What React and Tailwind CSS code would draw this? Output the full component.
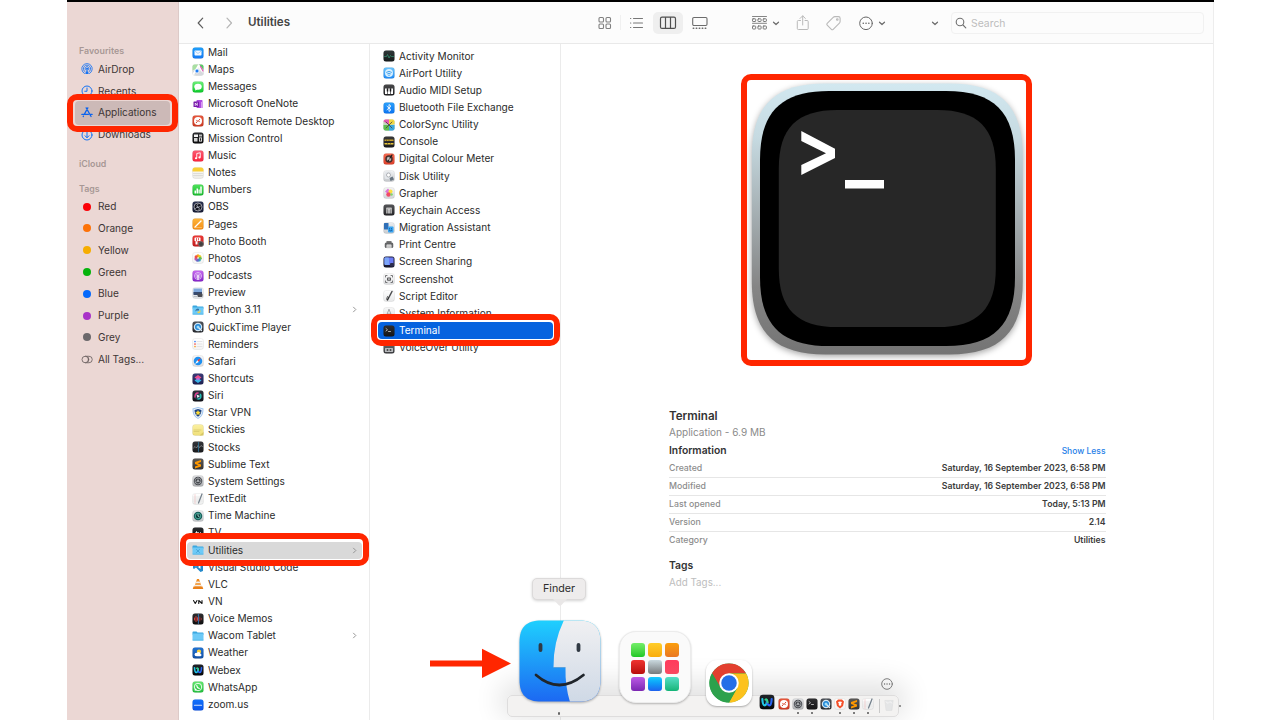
import React from "react";

const S = ({ d, c = "#fff", w = 2, f = "none", o = 1 }) => (
  <path d={d} stroke={c} strokeWidth={w} fill={f} opacity={o} strokeLinecap="round" strokeLinejoin="round" />
);
const F = ({ d, c = "#fff" }) => <path d={d} fill={c} />;
const C = ({ x = 12, y = 12, r = 5, c = "#fff", s = "none", w = 1.5 }) => (
  <circle cx={x} cy={y} r={r} fill={c} stroke={s} strokeWidth={w} />
);
const R = ({ x, y, w, h, c = "#fff", r = 0 }) => <rect x={x} y={y} width={w} height={h} rx={r} fill={c} />;

const folder = (extra) => (
  <>
    <F d="M1 4.500Q1 3 2.500 3H9l2 2h10.500Q23 5 23 6.500V9H1z" c="#3aa7df" />
    <R x={1} y={7} w={22} h={14} r={1.5} c="#6dcaf7" />
    <R x={1} y={19.5} w={22} h={1.5} c="#4fb2e4" />
    {extra}
  </>
);

const art = {
  mail: ["#1ea0fb", "#1678f2", <><R x={5} y={7} w={14} h={10} r={1.5} c="#f4f8ff" /><S d="M5.500 8l6.500 5 6.500-5" c="#7bb5f3" w={1.2} /></>],
  maps: ["#f2f3f1", "#e6ebe6", <><F d="M1 5q0-4 4-4h7v7L1 13z" c="#a8dfa2" /><F d="M14 1h5q4 0 4 4v7z" c="#58c965" /><F d="M1 14l9-5 13 9v3l-3 2H8z" c="#d6d9de" /><S d="M3 20L13 3l8 12" c="#fff" w={3} /><S d="M17 5l5 9" c="#de5db4" w={2.5} /><C x={10} y={14} r={4} c="#1b7cf4" s="#fff" /></>],
  messages: ["#6df07a", "#0bc929", <><ellipse cx="12" cy="11.500" rx="7.500" ry="6" fill="#fff" /><F d="M7 15l-1 4 5-2z" /></>],
  onenote: [null, null, <><R x={9} y={4} w={12} h={16} r={1.5} c="#ae4be0" /><R x={18} y={8} w={4} h={12} c="#d59bf0" /><R x={3} y={7} w={11} h={11} r={1} c="#7719aa" /><S d="M6.500 15V10l4 5v-5" w={1.5} /></>],
  remote: ["#e8573c", "#c93a24", <><C r={8} /><S d="M8.500 15.500l2.500-3-1.500-2M15.500 8.500l-2.500 3 1.500 2" c="#d8452d" w={2} /></>],
  mission: ["#2c2d30", "#0b0b0c", <><R x={4} y={5} w={8} h={5} c="#f4f4f4" /><R x={4} y={12} w={7} h={7} c="#d3d3d3" /><R x={14} y={5} w={6} h={4} c="#bbb" /><R x={14} y={11} w={6} h={8} c="#fff" /><R x={15.5} y={12.5} w={3} h={5} c="#222" /></>],
  music: ["#fb5c74", "#fa233b", <><S d="M9.500 16V7l7-1.500V14" w={1.8} /><C x={8} y={16.5} r={2.2} /><C x={15} y={14.8} r={2.2} /></>],
  notes: ["#fbfbf8", "#ecebe6", <><F d="M1 9V6q0-5 5-5h12q5 0 5 5v3z" c="#f9cf35" /><S d="M3 13h18M3 17h18" c="#c9c8c4" w={1} /></>],
  numbers: ["#4fe35b", "#18b82e", <><R x={5} y={13} w={3} h={6} /><R x={9} y={9} w={3} h={10} /><R x={13} y={11} w={2.5} h={8} /><R x={16.5} y={5} w={3} h={14} /></>],
  obs: ["#2b3350", "#161b34", <><C r={8} c="#11131d" s="#d8d9df" w={1.3} /><S d="M12 6q-4 3-1 6 4 2 6-2M7 15q2-4 6-2 3 2 1 5" c="#c5c8d6" w={1.5} /></>],
  pages: ["#fdb53c", "#f58d13", <><S d="M6 18L18 6" w={2.5} /><S d="M5 19h14" c="#ffdba1" w={1} /></>],
  booth: ["#ef3a36", "#c01a1c", <><R x={5} y={5} w={12} h={7} r={1} /><R x={7} y={12} w={4} h={7} /><S d="M9 7v5M13 7v3" c="#d22" w={1.5} /><C x={18} y={18} r={5} c="#44403f" s="#777" /></>],
  photos: ["#fff", "#f3f3f3", <><C y={7.5} r={3.2} c="#f9a51b" /><C x={15.5} y={9} r={3.2} c="#e6d12a" /><C x={16.5} y={12.5} r={3.2} c="#74c14a" /><C x={14.5} y={15.8} r={3.2} c="#33a9b9" /><C x={11} y={16.3} r={3.2} c="#5b6ec9" /><C x={8} y={13.8} r={3.2} c="#b45cb3" /><C x={8.3} y={9.8} r={3.2} c="#ef4f44" /><C r={1.5} c="#eee4cf" /></>],
  podcasts: ["#c86bf0", "#8421c8", <><C r={7} c="none" s="#f1dcfb" w={1.5} /><C r={4} c="none" s="#f1dcfb" w={1.3} /><C r={2} /><R x={10.8} y={13} w={2.4} h={6.5} r={1} /></>],
  preview: ["#f5f6f7", "#dfe2e5", <><R x={3} y={3} w={17} h={11} c="#7fa9dc" /><R x={3} y={10} w={17} h={6} c="#384b6e" /><R x={11} y={13} w={10} h={7} r={2} c="#4a4d54" /><S d="M4 19h6" c="#b8bcc2" /></>],
  python: [null, null, folder(<><F d="M9 10q3-2 5 0v3H9q-2 0-2 3-1-5 2-6z" c="#3572a5" /><F d="M15 12q3 0 2 4-1 3-6 2v-3h4z" c="#f6cf45" /></>)],
  quicktime: ["#50545b", "#25282d", <><C r={8.5} c="#d3e7f5" /><C r={6} c="#2388d8" /><C r={3} c="#9ddcf8" /><S d="M14 14l5 5" c="#dceaf4" w={2.5} /></>],
  reminders: ["#fff", "#f3f3f3", <><C x={6} y={7} r={1.7} c="#3583f6" /><C x={6} y={12} r={1.7} c="#f4493f" /><C x={6} y={17} r={1.7} c="#f7a02c" /><S d="M10 7h10M10 12h10M10 17h10" c="#cfcfd2" w={1} /></>],
  safari: ["#f7f7f7", "#dcdcde", <><C r={8.5} c="#1e90f0" /><F d="M18 6l-4.500 8-3-3.500z" c="#f0413a" /><F d="M6 18l4.500-7.500 3 3.500z" /></>],
  shortcuts: ["#3b3b78", "#1d2150", <><F d="M12 4l7 5-7 5-7-5z" c="#ef4f8a" /><F d="M12 10l7 5-7 5-7-5z" c="#36b6e8" /><F d="M12 9l4 3-4 3-4-3z" c="#b767e0" /></>],
  siri: ["#31313c", "#101017", <><C r={7.5} c="#27384b" /><S d="M6 14q0-8 6-8" c="#e23c8d" w={3} /><S d="M17 9q3 8-5 9" c="#24bfb3" w={3} /><F d="M9 9l7 3-5 4z" c="#e6f4f5" /></>],
  star: [null, null, <><F d="M12 0l11 3q1 15-11 21Q0 18 1 3z" c="#9fc4ef" /><F d="M12 2l9 2.500Q21 17 12 22 3 17 3 4.500z" c="#f2f7fd" /><F d="M12 4l7 2q0 9-7 13.500Q5 15 5 6z" c="#1c4487" /><F d="M12 6l1.700 3.600 3.800.4-2.800 2.700.8 3.900L12 14.700l-3.500 1.900.8-3.900L6.500 10l3.800-.4z" c="#ffdb35" /></>],
  stickies: ["#fbf0a1", "#efdf78", <><S d="M4 12h14M4 15h10" c="#c8b95a" w={1} /><F d="M15 23l8-7v7z" c="#d7c765" /></>],
  stocks: ["#35363b", "#18191c", <><S d="M3 14l3-3 3 3 3-5 3 4 3-4 3 2" c="#b2b5b9" w={1.1} /><S d="M13 3v18" c="#2f7ea5" w={1.5} /></>],
  sublime: ["#5c5a58", "#363433", <F d="M18 4v4l-7 2.500 7 2.500v4L6 21v-4l7-2.500L6 12V8z" c="#ff9800" />],
  settings: ["#dfe0e2", "#aeb0b3", <><C r={8.5} c="#45484d" /><C r={6} c="none" s="#a7aaae" w={1.5} /><C r={2} c="#c2c4c7" /><S d="M12 10V4M10 13l-5 3M14 13l5 3" c="#a7aaae" w={1.3} /></>],
  textedit: ["#fff", "#eceded", <><S d="M3 8h18M3 12h18M3 16h18" c="#dadada" w={1} /><S d="M6 3v18" c="#f2b2b2" w={1} /><S d="M20 2l-7 18" c="#74818c" w={2.5} /></>],
  timemachine: ["#ecedef", "#bfc2c5", <><C r={8.5} c="#155e59" /><C r={5.5} c="#0c3a39" s="#59c2b1" /><S d="M12 8.500V12l2.500 1.500" c="#c3f5eb" w={1.5} /></>],
  tv: ["#2b2c2f", "#0b0b0c", <S d="M9 9v6h2M7.500 11H11M13 11l2 4 2-4" w={1.5} />],
  utilities: [null, null, folder(<S d="M9 11l6 6M15 11l-6 6" c="#3f9bd0" w={1.5} />)],
  vscode: [null, null, <><F d="M17 2l5 2v16l-5 2L8 13l-4 3-2-1.500V9.500L4 8l4 3z" c="#2489ca" /><F d="M17 8v8l-5-4z" /></>],
  vlc: [null, null, <><F d="M10 2h4l5 15H5z" c="#f08a1d" /><F d="M8.700 7h6.600l1.100 3.500H7.600z" c="#f4f1ec" /><F d="M6.500 13.500h11l.8 2.500H5.700z" c="#f4f1ec" /><F d="M3 17h18l1.500 5h-21z" c="#e9801a" /></>],
  vn: [null, null, <S d="M3 9l3.500 6L10 9M13.500 15V9l6.500 6V9" c="#161616" w={2.2} />],
  memos: ["#2f2f31", "#0d0d0e", <><S d="M5 10v4M8 7v10M11 9.500v5" c="#f0443e" w={1.8} /><S d="M12.800 3v18" c="#4aa3ff" w={1.3} /><S d="M15.500 8v8M18.500 10.500v3" c="#a5393a" w={1.8} /></>],
  wacom: [null, null, folder(null)],
  weather: ["#2173d4", "#124fa2", <><C x={14} y={9.5} r={4.3} c="#fbd13b" /><C x={8.5} y={15} r={3.3} /><C x={13} y={14} r={4} /><R x={8} y={14} w={11} h={4.3} r={2.1} /></>],
  webex: ["#20242a", "#050608", <><S d="M5 7.500q.5 9.500 3.500 9.500t3.500-7" c="#21c8e8" w={3.2} /><S d="M12 10q.5 7 3.500 7T19 7.500" c="#2a66f5" w={3.2} /><S d="M9.500 8.500q2.500-2 3.500 4" c="#35d685" w={2.8} /></>],
  whatsapp: ["#64e86f", "#20bd3b", <><C r={7.5} c="none" s="#fff" w={1.8} /><F d="M5 19.500l1.500-5 3.500 3.500z" /><S d="M9.500 9q0 4 5 6" w={2.4} /></>],
  zoom: ["#1272fc", "#0a54ea", <S d="M5 12.500h14" c="#cfe0fd" w={2.4} />],
  activity: ["#30393a", "#151a1b", <S d="M3 13h4l2-4 3 7 3-5 2 2h4" c="#35a07c" w={1.3} />],
  airport: ["#6cc6fd", "#1d88f3", <><C r={8} c="#d7effe" /><S d="M7 10.500q5-4 10 0M9 13.500q3-2.500 6 0" c="#2492ec" w={1.6} /><C y={16.5} r={1.3} c="#2492ec" /></>],
  midi: ["#4a4a4c", "#222224", <><R x={4} y={9} w={4.5} h={11} /><R x={9.7} y={9} w={4.5} h={11} /><R x={15.5} y={9} w={4.5} h={11} /><R x={7.5} y={9} w={3} h={6} c="#19191a" /><R x={13.5} y={9} w={3} h={6} c="#19191a" /></>],
  bluetooth: ["#2aa0fb", "#0b74f2", <S d="M8 8.500l8 7-4 3.500V5l4 3.500-8 7" w={1.7} />],
  colorsync: ["#d7e4a8", "#9ac8de", <><F d="M1 5q0-4 4-4h7v11z" c="#e85bb3" /><F d="M12 1h7q4 0 4 4v5l-11 2z" c="#f1d742" /><F d="M23 12v7q0 4-4 4h-7V12z" c="#3aa7df" /><F d="M1 12h11v11H5q-4 0-4-4z" c="#62bf4f" /><S d="M6 6l12 12M18 6L6 18" c="#444" w={1.6} /></>],
  console: ["#39393a", "#1a1a1b", <><S d="M4 8.500h16" c="#c8a12b" w={2.6} /><S d="M4 15.500h16" c="#e8c53b" w={2.6} /><S d="M7 8.500v0M12 8.500v0M9 15.500v0M15 15.500v0" c="#2b2b2b" w={1.5} /></>],
  colour: ["#f76a50", "#dc3f2a", <><C r={7.5} c="#47302d" /><C r={4.5} c="#b7b7b7" /><S d="M18 4l-8 12" c="#1b1b1b" w={2.5} /><C r={1.5} c="#f5f5f5" /></>],
  disk: ["#f5f6f7", "#c3c6ca", <><R x={4} y={3} w={13} h={15} r={2} c="#e3e6ea" /><C x={11} y={10} r={4} c="#fff" s="#9b9ea3" /><F d="M13 16l6-3 3 6-7 3z" c="#687480" /></>],
  grapher: ["#f4f4f4", "#d2d4d8", <><F d="M4 9l6-6 4 5-5 5z" c="#dc76d9" /><C x={15} y={9} r={4} c="#ffe03c" /><C x={11} y={15} r={4.5} c="#f04b68" /><C x={17} y={15} r={2.5} c="#80d66a" /></>],
  keychain: ["#56575a", "#232326", <><R x={6} y={7} w={12} h={4} r={2} c="#bdbdbd" /><R x={6} y={10} w={3.5} h={9} c="#a9a9a9" /><R x={14.5} y={10} w={3.5} h={9} c="#a9a9a9" /><R x={10.5} y={10} w={3} h={9} c="#e4e4e4" /></>],
  migration: ["#eceef1", "#c8cbcf", <><R x={2} y={2} w={9} h={13} c="#2f6fb7" r={1} /><R x={10} y={9} w={11} h={12} c="#37a5f3" r={2} /><S d="M13 13v1M17 13v1M13 17q2.500 2 5 0" c="#0f3d73" w={1.2} /></>],
  print: [null, null, <><R x={7} y={4} w={10} h={5} c="#777" /><R x={3.5} y={7} w={17} h={11} r={3} c="#626365" /><R x={7} y={11} w={10} h={8} r={1} c="#e9e9e9" /><S d="M9 14h6M9 16.500h6" c="#888" w={1} /></>],
  sharing: ["#2a2b4b", "#15162a", <><R x={3} y={3} w={18} h={15} r={2} c="#6c7cf5" /><R x={3} y={3} w={9} h={15} r={2} c="#7ca5fa" /><R x={14} y={14} w={8} h={7} r={2} c="#2b2d4f" /></>],
  screenshot: ["#fbfbfb", "#dcdddf", <><S d="M5 8V5h3M16 5h3v3M19 16v3h-3M8 19H5v-3" c="#58595b" w={1.6} /><R x={8} y={9} w={8} h={6.5} r={1.5} c="#58595b" /><C r={1.7} c="#eee" /></>],
  script: ["#fff", "#e6e7e8", <><S d="M18 3L9 20" c="#4a4b4d" w={3} /><S d="M9 13q-3 5-1 7 3-1 3-5" c="#2c2c2e" w={1.5} /></>],
  sysinfo: ["#f8f8f8", "#dfe0e2", <S d="M12 5L6 19M12 5l6 14M9 14h6M4 19h16" c="#8d8f92" w={1.5} />],
  terminal: ["#2f2f31", "#151516", <S d="M6 7l3 2.500L6 12M11 13h4" c="#e8e8e8" w={1.4} />],
  voiceover: ["#6c6e71", "#3b3c3f", <><R x={4} y={12} w={16} h={8} r={1} c="#b9bbbe" /><C x={9} y={16} r={2} c="#444" /><C x={15} y={16} r={2} c="#444" /></>],
  brave: ["#fff", "#f1f1f1", <><F d="M8 3h8l4 4-2 9-6 5-6-5L4 7z" c="#f4502a" /><F d="M8 8l4-1 4 1-2 4 1 2-3 2-3-2 1-2z" /></>],
};

function AppIcon({ k, cls = "size-3" }) {
  const [a, b, g] = art[k];
  const id = React.useId();
  return (
    <svg viewBox="0 0 24 24" className={`${cls} shrink-0`}>
      {a && (
        <>
          <defs>
            <linearGradient id={id} x1="0" y1="0" x2="0" y2="1">
              <stop offset="0" stopColor={a} />
              <stop offset="1" stopColor={b} />
            </linearGradient>
          </defs>
          <rect x="1" y="1" width="22" height="22" rx="5" fill={`url(#${id})`} stroke="#000" strokeOpacity=".14" strokeWidth=".8" />
        </>
      )}
      {g}
    </svg>
  );
}

const apps = [
  ["Mail", "mail"], ["Maps", "maps"], ["Messages", "messages"], ["Microsoft OneNote", "onenote"],
  ["Microsoft Remote Desktop", "remote"], ["Mission Control", "mission"], ["Music", "music"], ["Notes", "notes"],
  ["Numbers", "numbers"], ["OBS", "obs"], ["Pages", "pages"], ["Photo Booth", "booth"], ["Photos", "photos"],
  ["Podcasts", "podcasts"], ["Preview", "preview"], ["Python 3.11", "python", true], ["QuickTime Player", "quicktime"],
  ["Reminders", "reminders"], ["Safari", "safari"], ["Shortcuts", "shortcuts"], ["Siri", "siri"], ["Star VPN", "star"],
  ["Stickies", "stickies"], ["Stocks", "stocks"], ["Sublime Text", "sublime"], ["System Settings", "settings"],
  ["TextEdit", "textedit"], ["Time Machine", "timemachine"], ["TV", "tv"], ["Utilities", "utilities", true],
  ["Visual Studio Code", "vscode"], ["VLC", "vlc"], ["VN", "vn"], ["Voice Memos", "memos"],
  ["Wacom Tablet", "wacom", true], ["Weather", "weather"], ["Webex", "webex"], ["WhatsApp", "whatsapp"], ["zoom.us", "zoom"],
];

const utilities = [
  ["Activity Monitor", "activity"], ["AirPort Utility", "airport"], ["Audio MIDI Setup", "midi"],
  ["Bluetooth File Exchange", "bluetooth"], ["ColorSync Utility", "colorsync"], ["Console", "console"],
  ["Digital Colour Meter", "colour"], ["Disk Utility", "disk"], ["Grapher", "grapher"], ["Keychain Access", "keychain"],
  ["Migration Assistant", "migration"], ["Print Centre", "print"], ["Screen Sharing", "sharing"],
  ["Screenshot", "screenshot"], ["Script Editor", "script"], ["System Information", "sysinfo"],
  ["Terminal", "terminal"], ["VoiceOver Utility", "voiceover"],
];

function FileRow({ name, icon, more, tone = "" }) {
  return (
    <li className={`flex h-[17.17px] items-center gap-1 rounded-[4px] pr-1 pl-[5px] ${tone}`}>
      <AppIcon k={icon} />
      <span className="flex-1 whitespace-nowrap">{name}</span>
      {more && (
        <svg viewBox="0 0 8 8" className="size-[7px]" fill="none" stroke="#929292" strokeWidth="1.1">
          <path d="M2.500 1l3 3-3 3" />
        </svg>
      )}
    </li>
  );
}

const tags = [
  ["Red", "bg-[#fb0007]"], ["Orange", "bg-[#fd7208]"], ["Yellow", "bg-[#f6ad00]"], ["Green", "bg-[#06b30c]"],
  ["Blue", "bg-[#0569fb]"], ["Purple", "bg-[#a933c8]"], ["Grey", "bg-[#6b686b]"],
];

const line = { fill: "none", stroke: "currentColor", strokeLinecap: "round", strokeLinejoin: "round" };

function SideItem({ label, children }) {
  return (
    <li className="flex h-[21.8px] items-center pl-[13px]">
      <span className="flex w-[14px] justify-center text-[#1673f3]">{children}</span>
      <span className="pl-1">{label}</span>
    </li>
  );
}

function Sidebar() {
  return (
    <aside className="flex w-28 shrink-0 flex-col border-r border-[#dccac8] bg-[#ebd7d4] pt-[41.4px] text-[10.05px] text-[#3d3535]">
      <h2 className="h-[15px] pl-3 text-[8.8px] leading-[15px] font-semibold tracking-[0.05px] text-[#a79795]">Favourites</h2>
      <ul>
        <SideItem label="AirDrop">
          <svg viewBox="0 0 24 24" className="size-3" {...line} strokeWidth="1.7">
            <path d="M7 21a10.500 10.500 0 1 1 10 0M8.500 18a7.300 7.300 0 1 1 7 0M10 14.800a4 4 0 1 1 4 0" />
            <path d="M12 13l-3.500 9h7z" fill="currentColor" stroke="none" />
            <circle cx="12" cy="11.5" r="1.5" fill="currentColor" />
          </svg>
        </SideItem>
        <SideItem label="Recents">
          <svg viewBox="0 0 24 24" className="size-3" {...line} strokeWidth="2">
            <circle cx="12" cy="12" r="10" /><path d="M12 6v6.500H7.500" />
          </svg>
        </SideItem>
        <li className="mx-2 my-[-1px] flex h-[24px] items-center rounded-[4px] bg-[#ccb9b7] pl-[5px]">
          <svg viewBox="0 0 24 24" className="size-[13px] w-[14px] text-[#0a62ee]" {...line} strokeWidth="2.3">
            <path d="M13.500 3.500L7 15.500M10.500 3.500l9 16M2.500 15.500h12M18.500 15.500H21.500M5 19.500l.5-.8" />
          </svg>
          <span className="pl-1">Applications</span>
        </li>
        <SideItem label="Downloads">
          <svg viewBox="0 0 24 24" className="size-3" {...line} strokeWidth="2">
            <circle cx="12" cy="12" r="10" /><path d="M12 6.500v10.500M8 13.500l4 4 4-4" />
          </svg>
        </SideItem>
      </ul>
      <h2 className="mt-[10px] h-[17px] pl-3 text-[8.8px] leading-[16px] font-semibold text-[#a79795]">iCloud</h2>
      <h2 className="mt-2 h-[15px] pl-3 text-[8.8px] leading-[16px] font-semibold text-[#a79795]">Tags</h2>
      <ul>
        {tags.map(([n, c]) => (
          <SideItem key={n} label={n}><i className={`size-2 rounded-full ${c}`} /></SideItem>
        ))}
        <SideItem label="All Tags...">
          <svg viewBox="0 0 24 18" className="w-3 text-[#655b5b]" {...line} strokeWidth="1.6">
            <circle cx="8.5" cy="9" r="6.5" /><path d="M9 2.500h7a6.500 6.500 0 0 1 0 13H9M13 3.500a6.500 6.500 0 0 1 0 11" />
          </svg>
        </SideItem>
      </ul>
    </aside>
  );
}

function Chev({ cls }) {
  return <svg viewBox="0 0 10 10" className={`size-[10px] shrink-0 text-[#6c6c6c] ${cls}`} {...line} strokeWidth="1.2"><path d="M2.500 4.200L5 6.500 7.500 4.200" /></svg>;
}

function Toolbar() {
  return (
    <header className="flex h-[42px] shrink-0 items-center border-b border-[#e9e9e9] bg-[#fcfcfc] pl-[14px] text-[#666]">
      <svg viewBox="0 0 14 14" className="size-[14px] text-[#5c5c5c]" {...line} strokeWidth="1.2"><path d="M9.700 2.200L5.200 7 9.700 11.800" /></svg>
      <svg viewBox="0 0 14 14" className="ml-[15px] size-[14px] text-[#b5b5b5]" {...line} strokeWidth="1.2"><path d="M5 2.200L9.500 7 5 11.800" /></svg>
      <h1 className="ml-3 w-[348px] pt-px text-[11.6px] font-semibold text-[#454545]">Utilities</h1>
      <svg viewBox="0 0 16 16" className="size-4 text-[#808080]" {...line} strokeWidth="1.1">
        <rect x="3" y="2.5" width="4.500" height="4.500" rx="1" /><rect x="10" y="2.5" width="4.500" height="4.500" rx="1" /><rect x="3" y="9" width="4.500" height="4.500" rx="1" /><rect x="10" y="9" width="4.500" height="4.500" rx="1" />
      </svg>
      <span className="mx-2 h-[15px] w-px bg-[#f0f0f0]" />
      <svg viewBox="0 0 16 16" className="size-4 text-[#777]" {...line} strokeWidth="1.1">
        <path d="M4.500 3.500H13.500M4.500 8H13.500M4.500 12.500H13.500M1.500 3.500h.3M1.500 8h.3M1.500 12.500h.3" />
      </svg>
      <span className="ml-2 flex h-[22px] w-[30px] items-center justify-center rounded-[5px] bg-[#efefef]">
        <svg viewBox="0 0 18 14" className="w-[18px] text-[#4f4f4f]" {...line} strokeWidth="1.2"><rect x="1.5" y="1.2" width="15" height="11.2" rx="1.5" /><path d="M6.500 1.500v10.600M11.500 1.500v10.600" /></svg>
      </span>
      <svg viewBox="0 0 16 16" className="ml-[9px] size-4 text-[#6c6c6c]" {...line} strokeWidth="1.1">
        <rect x=".7" y="2.5" width="14.300" height="8" rx="1.2" /><path d="M1.200 13.200h.6M4.200 13.200h.6M7.200 13.200h.6M10.200 13.200h.6M13.200 13.200h.6" strokeWidth="1.4" />
      </svg>
      <svg viewBox="0 0 17 16" className="ml-[43px] h-4 w-[17px] text-[#777]" {...line} strokeWidth="1">
        <path d="M1.500 1.500h14M1.500 8.300h14" strokeWidth=".9" /><rect x="1.5" y="3.8" width="3.2" height="2.7" rx=".6" /><rect x="6.9" y="3.8" width="3.2" height="2.7" rx=".6" /><rect x="12.2" y="3.8" width="3.2" height="2.7" rx=".6" /><rect x="1.5" y="11" width="3.2" height="3" rx=".6" /><rect x="6.9" y="11" width="3.2" height="3" rx=".6" /><rect x="12.2" y="11" width="3.2" height="3" rx=".6" />
      </svg>
      <Chev cls="ml-[3px]" />
      <svg viewBox="0 0 16 16" className="ml-[14px] size-4 text-[#b9b9b9]" {...line} strokeWidth="1"><path d="M5.500 5.500H3.300q-1 0-1 1v7q0 1 1 1h8.900q1 0 1-1v-7q0-1-1-1H10M7.700 10V1M5 3.500L7.700.8l2.700 2.700" /></svg>
      <svg viewBox="0 0 17 16" className="ml-[14px] h-4 w-[17px] text-[#b9b9b9]" {...line} strokeWidth="1.1"><path d="M2.200 8.300l6-6q.7-.7 1.600-.7h3.700q1.600 0 1.600 1.600v3.300q0 .9-.7 1.600l-6.200 6.200q-.9.9-1.800 0L2.200 10.200q-.9-.9 0-1.900z" /><circle cx="12.3" cy="4.5" r=".8" /></svg>
      <svg viewBox="0 0 16 16" className="ml-4 size-4 text-[#666]" {...line} strokeWidth="1"><circle cx="8" cy="8.3" r="6.3" /><path d="M5.200 8.300h.1M8 8.300h.1M10.800 8.300h.1" strokeWidth="1.5" /></svg>
      <Chev cls="ml-[3px]" />
      <Chev cls="ml-[43px]" />
      <div className="mt-px ml-[11px] flex h-[22px] w-[253px] items-center gap-1 rounded-[4px] border border-[#f1f1f1] bg-[#fcfcfc] pl-[3px] text-[10.4px] text-[#bcbcbc]">
        <svg viewBox="0 0 12 12" className="size-3 text-[#707070]" {...line} strokeWidth="1.1"><circle cx="5" cy="5" r="3.8" /><path d="M8 8l2.800 2.800" /></svg>
        <span className="pt-px">Search</span>
      </div>
    </header>
  );
}

const squircle = (x, y, s) => {
  const r = s * 0.27, c = s * 0.083, e = s;
  return `M${x + r} ${y}H${x + e - r}C${x + e - c} ${y} ${x + e} ${y + c} ${x + e} ${y + r}V${y + e - r}C${x + e} ${y + e - c} ${x + e - c} ${y + e} ${x + e - r} ${y + e}H${x + r}C${x + c} ${y + e} ${x} ${y + e - c} ${x} ${y + e - r}V${y + r}C${x} ${y + c} ${x + c} ${y} ${x + r} ${y}Z`;
};

function BigTerminal() {
  return (
    <svg viewBox="0 0 291 292" className="h-[292px] w-[291px]">
      <defs>
        <linearGradient id="rim" x1="0" y1="0" x2="0" y2="1">
          <stop offset="0" stopColor="#d2e8f0" /><stop offset=".2" stopColor="#c6dae1" /><stop offset=".75" stopColor="#858585" /><stop offset="1" stopColor="#747474" />
        </linearGradient>
      </defs>
      <path d={squircle(10.8, 9.5, 271)} fill="url(#rim)" className="drop-shadow-[0_2px_3px_rgba(0,0,0,0.35)]" />
      <path d={squircle(19, 17, 255)} fill="#000" />
      <path d={squircle(37.8, 36, 217)} fill="#272727" />
      <path d="M60.300 57v10L85 79.300 60.300 91v10L94 84v-9.300z" fill="#fff" />
      <rect x="104" y="106" width="39" height="8.5" fill="#fff" />
    </svg>
  );
}

const info = [
  ["Created", "Saturday, 16 September 2023, 6:58 PM"],
  ["Modified", "Saturday, 16 September 2023, 6:58 PM"],
  ["Last opened", "Today, 5:13 PM"],
  ["Version", "2.14"],
  ["Category", "Utilities"],
];

function Preview() {
  return (
    <section className="flex flex-1 flex-col pt-[30px] pr-[107.5px] pl-[108px]">
      <div className="ml-[72px]"><BigTerminal /></div>
      <div className="mt-[42px] h-4 text-[11.6px] leading-[17px] font-semibold text-[#333]">Terminal</div>
      <div className="h-4 text-[10px] leading-4 text-[#8a8a8a]">Application - 6.9 MB</div>
      <div className="mt-[3px] flex h-4 items-center justify-between">
        <h3 className="text-[10.3px] font-semibold text-[#333]">Information</h3>
        <span className="pt-px text-[8.5px] font-medium text-[#267fe8]">Show Less</span>
      </div>
      <dl className="pt-px text-[8.75px] font-medium">
        {info.map(([k, v], i) => (
          <div key={k} className={`flex h-[18px] items-center justify-between ${i < 4 ? "border-b border-[#e6e6e6]" : ""}`}>
            <dt className="text-[#8c8c8c]">{k}</dt>
            <dd className="text-[8.7px] font-semibold whitespace-nowrap text-[#3c3c3c]">{v}</dd>
          </div>
        ))}
      </dl>
      <h3 className="mt-2 h-4 text-[10.4px] leading-4 font-semibold text-[#333]">Tags</h3>
      <div className="h-4 text-[9.8px] leading-[17px] text-[#bdbdbd]">Add Tags...</div>
    </section>
  );
}

function FinderIcon() {
  return (
    <svg viewBox="0 0 82 82" className="size-[82px] overflow-visible drop-shadow-[0_1px_1px_rgba(0,0,0,0.3)]">
      <defs>
        <linearGradient id="fl" x1="0" y1="0" x2="0" y2="1"><stop offset="0" stopColor="#1fd0fe" /><stop offset="1" stopColor="#1c68f2" /></linearGradient>
        <linearGradient id="fr" x1="0" y1="0" x2="0" y2="1"><stop offset="0" stopColor="#f0f0f2" /><stop offset="1" stopColor="#cfd9e6" /></linearGradient>
        <clipPath id="fc"><path d={squircle(0.5, 0.5, 81)} /></clipPath>
      </defs>
      <g clipPath="url(#fc)">
        <rect width="82" height="82" fill="url(#fl)" />
        <path d="M45 0Q34 23 34.500 47.500H46.500Q46 66 51 82H82V0z" fill="url(#fr)" />
      </g>
      <path d="M34.500 47.500H46.500" fill="none" stroke="#2478bf" strokeOpacity=".5" strokeWidth=".8" />
      <path d="M21.500 25v5M59.500 25v5" stroke="#303943" strokeWidth="3.8" strokeLinecap="round" />
      <path d="M17 55Q40 75 64.500 55" fill="none" stroke="#20252b" strokeWidth="2.7" strokeLinecap="round" />
    </svg>
  );
}

const pads = [
  "from-[#72ee68] to-[#1cc824]", "from-[#ffcd29] to-[#f9ac09]", "from-[#fb9f0a] to-[#e97721]",
  "from-[#ef332f] to-[#b80a0b]", "from-[#cad9df] to-[#777b7d]", "from-[#ff3b5c] to-[#f94860]",
  "from-[#bd59e6] to-[#7b27b2]", "from-[#19ccfd] to-[#1f61ee]", "from-[#52dfc7] to-[#12b477]",
];

function Chrome() {
  return (
    <svg viewBox="0 0 48 48" className="size-[40px]">
      <circle cx="24" cy="24" r="23.5" fill="#2da14c" />
      <path d="M24 24L3.650 12.250A23.500 23.500 0 0 1 44.350 12.250H24z" fill="#e3402f" />
      <path d="M24 12.500H44.500A23.500 23.500 0 0 1 24 47.500L34 29.750z" fill="#fcc21d" />
      <path d="M3.650 12.250L14 30l10-6V12.500z" fill="#e3402f" />
      <path d="M3.650 12.250A23.500 23.500 0 0 0 24 47.500L34 29.750 24 24l-10 5.750z" fill="#2da14c" />
      <circle cx="24" cy="24" r="11.7" fill="#fff" /><circle cx="24" cy="24" r="9.3" fill="#246fe8" />
    </svg>
  );
}

const dockApps = [["remote", 0], ["settings", 1], ["terminal", 1], ["quicktime", 0], ["brave", 1], ["sublime", 1], ["textedit", 1]];

function Dock() {
  return (
    <div className="absolute bottom-[3px] left-[507px] flex h-[97px] w-[392px] items-end">
      <div className="absolute inset-x-0 bottom-0 h-[22px] rounded-[5px] border border-[#dedddd] bg-[#f2f1f0]/95 shadow-[0_-6px_28px_6px_rgba(0,0,0,0.12)]" />
      <div className="relative ml-3 flex h-[97px] w-[82px] flex-col items-center">
        <FinderIcon />
        <i className="mt-[10px] mr-[2px] size-[2.5px] rounded-full bg-[#666]" />
      </div>
      <div className="relative mb-[14px] ml-[18px] grid size-[72px] grid-cols-[repeat(3,14px)] place-content-center gap-[3.3px] rounded-[17px] border border-[#ececec] bg-[#fafafa] shadow-[0_1px_2px_rgba(0,0,0,0.25)]">
        {pads.map((p) => <i key={p} className={`size-[14px] rounded-[3px] bg-linear-to-b ${p}`} />)}
      </div>
      <div className="relative mb-[11px] ml-[15px] flex size-[46px] items-center justify-center rounded-[11px] bg-white shadow-[0_1px_2px_rgba(0,0,0,0.3)]"><Chrome /></div>
      <div className="relative mb-[7px] ml-[7px]"><AppIcon k="webex" cls="block size-4" /></div>
      <div className="relative ml-[2px] flex">
        {dockApps.map(([k, on]) => (
          <div key={k} className="flex h-[19px] w-[14.05px] flex-col items-center">
            <AppIcon k={k} cls="size-3" />
            {on ? <i className="mt-[2px] size-0.5 rounded-full bg-[#555]" /> : null}
          </div>
        ))}
      </div>
      <i className="relative mb-1 ml-[4px] h-[14px] w-px bg-[#c9c9c9]" />
      <svg viewBox="0 0 12 14" className="relative mb-[6px] ml-[4px] h-[12px] w-[10px]"><path d="M1 1.500h10l-1.500 12h-7z" fill="#e4e5e6" stroke="#dcddde" strokeWidth=".7" /><path d="M2 3l3 2 2-2 3 2" stroke="#f5f5f5" fill="none" /></svg>
      <i className="absolute right-[-2px] bottom-[10px] size-0.5 rounded-full bg-[#777]" />
    </div>
  );
}

export default function App() {
  return (
    <div className="relative flex h-[720px] w-[1280px] overflow-hidden bg-white pl-[67px] font-[Inter,'Liberation_Sans',sans-serif]">
      <div className="flex w-[1147px] flex-col border-t-2 border-black">
        <div className="flex min-h-0 flex-1">
          <Sidebar />
          <main className="flex min-w-0 flex-1 flex-col border-r border-[#ededed]">
            <Toolbar />
            <div className="flex min-h-0 flex-1 text-[10.1px] text-[#2b2b2b]">
              <ul className="w-[191px] shrink-0 overflow-hidden border-r border-[#ebebeb] pr-[7px] pl-2">
                {apps.map(([n, k, m]) => <FileRow key={n} name={n} icon={k} more={m} tone={n === "Utilities" ? "bg-[#d9d9d9]" : ""} />)}
              </ul>
              <ul className="w-[191px] shrink-0 overflow-hidden border-r border-[#ebebeb] pt-[3.5px] pr-[7px] pl-2">
                {utilities.map(([n, k]) => <FileRow key={n} name={n} icon={k} tone={n === "Terminal" ? "bg-[#0663df] text-white" : ""} />)}
              </ul>
              <Preview />
            </div>
          </main>
        </div>
      </div>

      <div className="absolute top-[94px] left-[67px] h-[38px] w-[111px] rounded-[10px] border-[6px] border-[#ff2600]" />
      <div className="absolute top-[533px] left-[180px] h-[33px] w-[189px] rounded-[10px] border-[6px] border-[#ff2600]" />
      <div className="absolute top-[314px] left-[371px] h-[32px] w-[189px] rounded-[10px] border-[6px] border-[#ff2600]" />
      <div className="absolute top-[74px] left-[741px] h-[292px] w-[291px] rounded-[10px] border-[6px] border-[#ff2600]" />

      <svg viewBox="0 0 12 12" className="absolute top-[678px] left-[881px] size-3 text-[#777]" {...line} strokeWidth=".9"><circle cx="6" cy="6" r="5.3" /><path d="M3.500 6h.1M6 6h.1M8.500 6h.1" strokeWidth="1.3" /></svg>
      <Dock />
      <div className="absolute top-[578px] left-[532px] flex h-[22px] w-[54px] items-center justify-center rounded-[5px] border border-[#dcdada] bg-[#eeecec] text-[10.7px] text-[#2c2c2c] shadow-[0_1px_3px_rgba(0,0,0,0.18)]">Finder</div>
      <svg viewBox="0 0 14 7" className="absolute top-[599px] left-[553px] h-[7px] w-[14px]"><path d="M0 0h14L8.500 6Q7 7.500 5.500 6z" fill="#e9e7e7" /></svg>
      <svg viewBox="0 0 82 30" className="absolute top-[648px] left-[430px] h-[30px] w-[82px]"><path d="M0 12.500H52V.8L81 15.500 52 30V18.500H0z" fill="#ff2600" /></svg>
    </div>
  );
}
